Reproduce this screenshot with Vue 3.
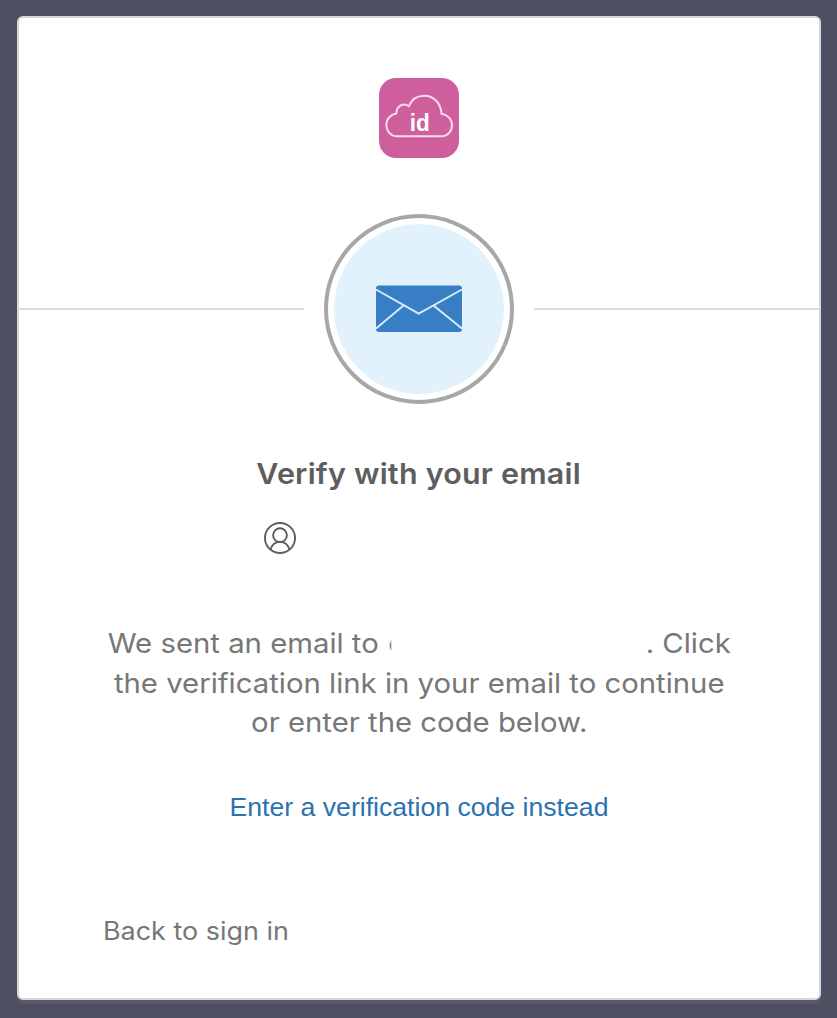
<script setup>
const lines = ['the verification link in your email to continue', 'or enter the code below.']
</script>

<template>
  <div class="page">
    <main class="card">
      <header class="brand">
        <svg class="logo" viewBox="0 0 80 80">
          <rect width="80" height="80" rx="17" fill="#ce5f9c" />
          <path d="M18 58.3H62C69 58.3 73 53 73 47C73 41 68 36.500 62.500 35.800C62 25 54.500 17.700 45.500 17.700C38.500 17.700 32.500 21.500 29.800 28.200C24 24 17.500 28.500 17.300 35.500C11 36.500 7.300 41.500 7.300 46.500C7.300 53 12 58.300 18 58.300Z" fill="none" stroke="#f8dceb" stroke-width="2" />
          <text x="40.700" y="52.700" text-anchor="middle" textLength="20" lengthAdjust="spacingAndGlyphs">id</text>
        </svg>
      </header>
      <div class="divider">
        <i class="rule"></i>
        <div class="beacon">
          <svg viewBox="0 0 170 170">
            <circle cx="85" cy="85" r="85" fill="#e1f2fd" />
            <rect x="42" y="61.500" width="86" height="46.500" rx="3" fill="#387ec5" />
            <path d="M42 65.500L84.700 89.600L128 65.500M42 104.500L69.500 81.500M128 104.500L99.500 81.500" fill="none" stroke="#d5ecfb" stroke-width="2" />
          </svg>
        </div>
        <i class="rule"></i>
      </div>
      <h1>Verify with your email</h1>
      <div class="identity">
        <svg viewBox="0 0 32 32" fill="none" stroke="#5e5e5e" stroke-width="1.900">
          <circle cx="16" cy="16" r="15.050" />
          <circle cx="16" cy="13.200" r="6.900" />
          <path d="M6.500 27.700C8 22.500 11.500 19.900 16 19.900S24 22.500 25.500 27.700" />
        </svg>
      </div>
      <div class="message">
        <p class="first"><span>We sent an email to</span><span class="clip">c</span><span class="end">. Click</span></p>
        <p v-for="line in lines" :key="line">{{ line }}</p>
      </div>
      <a class="code">Enter a verification code instead</a>
      <a class="back">Back to sign in</a>
    </main>
  </div>
</template>

<style>
body { margin: 0; background: #4e4f60; }
</style>

<style scoped>
.page { box-sizing: border-box; height: 1018px; padding: 16px 16px 18px 17px; background: #4e4f60; font-family: Inter, "Liberation Sans", sans-serif; }
.card { box-sizing: border-box; width: 804px; height: 984px; border: 2px solid #d8d8db; border-radius: 6px; background: #fff; box-shadow: 0 4px 0 #58596c; display: flex; flex-direction: column; align-items: center; }
.brand { padding-top: 60px; height: 80px; }
.logo { display: block; width: 80px; height: 80px; }
.logo text { font: bold 24px "Liberation Sans", sans-serif; fill: #fff; }
.divider { width: 100%; margin-top: 56px; display: flex; align-items: center; gap: 20px; }
.rule { flex: 1; height: 2px; background: #ddd; }
.beacon { box-sizing: border-box; width: 190px; height: 190px; border: 4px solid #a7a7a7; border-radius: 50%; padding: 6px; }
.beacon svg { display: block; width: 170px; height: 170px; }
h1 { margin: 50px 0 0; height: 40px; font-size: 29px; line-height: 40px; font-weight: 600; color: #5e5e5e; letter-spacing: 0.2px; white-space: nowrap; transform: scaleX(1.05); }
.identity { width: 310px; height: 32px; margin-top: 28px; }
.identity svg { display: block; width: 32px; height: 32px; }
.message { margin-top: 70px; color: #777; font-size: 27.500px; text-align: center; white-space: nowrap; transform: scaleX(1.066); }
.message p { margin: 0; height: 39.500px; line-height: 39.500px; }
.first { display: flex; width: 584.500px; }
.clip { width: 3px; margin-left: 9px; overflow: hidden; }
.end { margin-left: auto; }
.code { margin-top: 45px; height: 38px; font: 26.640px/38px "Liberation Sans", Arial, sans-serif; color: #2b72b0; }
.back { align-self: flex-start; margin: 86px 0 0 84px; height: 38px; font-size: 25px; line-height: 38px; color: #777; transform: scaleX(1.077); transform-origin: left; }
</style>
